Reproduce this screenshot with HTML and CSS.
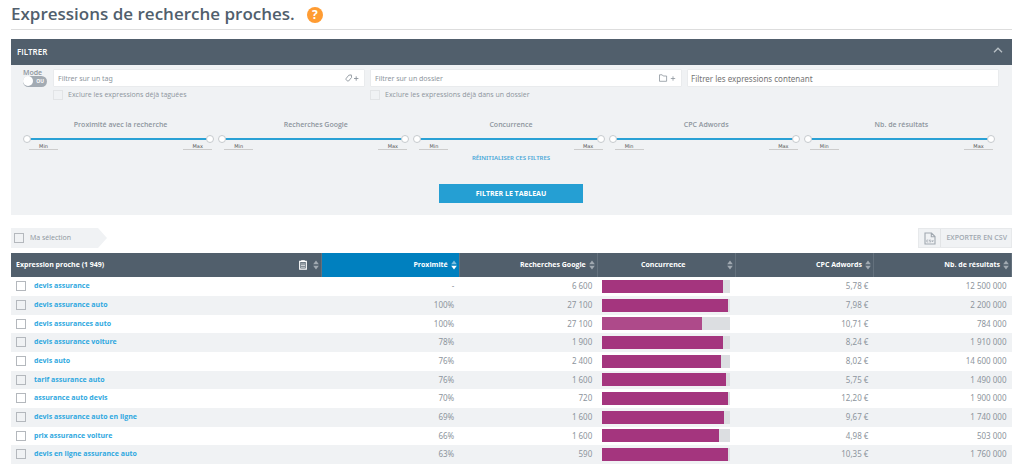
FILE: index.html
```html
<!DOCTYPE html>
<html lang="fr">
<head>
<meta charset="utf-8">
<title>Expressions de recherche proches</title>
<link rel="stylesheet" href="styles.css">
</head>
<body>
<svg class="defs" aria-hidden="true">
  <symbol id="sort" viewBox="0 0 6 10"><path d="M3 0.6 5.8 4.3H.2z"/><path d="M3 9.4 5.8 5.7H.2z"/></symbol>
  <symbol id="sort-desc" viewBox="0 0 6 10"><path d="M3 0.6 5.8 4.3H.2z" opacity=".5"/><path d="M3 9.4 5.8 5.7H.2z"/></symbol>
</svg>
<main class="page">
  <header class="title">
    <h1>Expressions de recherche proches.</h1>
    <button class="help" type="button" aria-label="Aide">?</button>
  </header>

  <form class="panel">
    <div class="panel-head">
      <h2>FILTRER</h2>
      <button class="collapse" type="button" aria-label="Replier">
        <svg viewBox="0 0 10 6"><path d="M1 5.2 5 1.2 9 5.2" fill="none" stroke="currentColor" stroke-width="1.3"/></svg>
      </button>
    </div>
    <div class="panel-body">
      <div class="fields">
        <label class="mode"><span>Mode</span>
          <span class="switch"><input type="checkbox"><span class="switch-text">OU</span></span>
        </label>
        <div class="field">
          <div class="box">
            <input type="text" placeholder="Filtrer sur un tag" aria-label="Filtrer sur un tag">
            <button class="add" type="button" aria-label="Ajouter un tag">
              <svg class="tag-icon" viewBox="0 0 14 8"><path d="M1.2 4.4 3.8 1.2 6.3.9 6.6 3.4 3.6 7Q2.9 7.4 2.2 6.8L1.2 5.8Q.7 5 1.2 4.4ZM9 4.5h4.4M11.2 2.3v4.4" fill="none" stroke="currentColor" stroke-width=".9"/></svg>
            </button>
          </div>
          <label class="check"><input type="checkbox"><span>Exclure les expressions déjà taguées</span></label>
        </div>
        <div class="field">
          <div class="box">
            <input type="text" placeholder="Filtrer sur un dossier" aria-label="Filtrer sur un dossier">
            <button class="add" type="button" aria-label="Ajouter un dossier">
              <svg class="folder-icon" viewBox="0 0 18 8"><path d="M1.5 7.3V.8H4.2L5.2 2H8.6V7.3ZM12.8 4.5h4.4M15 2.3v4.4" fill="none" stroke="currentColor" stroke-width=".8"/></svg>
            </button>
          </div>
          <label class="check"><input type="checkbox"><span>Exclure les expressions déjà dans un dossier</span></label>
        </div>
        <div class="field">
          <div class="box strong">
            <input type="text" placeholder="Filtrer les expressions contenant" aria-label="Filtrer les expressions contenant">
          </div>
        </div>
      </div>

      <div class="ranges">
        <fieldset class="range"><legend>Proximité avec la recherche</legend>
          <div class="slider"><input type="range" value="0" aria-label="Proximité minimum"><input type="range" value="100" aria-label="Proximité maximum"></div>
          <div class="bounds"><input type="text" placeholder="Min" aria-label="Proximité min"><input type="text" placeholder="Max" aria-label="Proximité max"></div>
        </fieldset>
        <fieldset class="range"><legend>Recherches Google</legend>
          <div class="slider"><input type="range" value="0" aria-label="Recherches minimum"><input type="range" value="100" aria-label="Recherches maximum"></div>
          <div class="bounds"><input type="text" placeholder="Min" aria-label="Recherches min"><input type="text" placeholder="Max" aria-label="Recherches max"></div>
        </fieldset>
        <fieldset class="range"><legend>Concurrence</legend>
          <div class="slider"><input type="range" value="0" aria-label="Concurrence minimum"><input type="range" value="100" aria-label="Concurrence maximum"></div>
          <div class="bounds"><input type="text" placeholder="Min" aria-label="Concurrence min"><input type="text" placeholder="Max" aria-label="Concurrence max"></div>
        </fieldset>
        <fieldset class="range"><legend>CPC Adwords</legend>
          <div class="slider"><input type="range" value="0" aria-label="CPC minimum"><input type="range" value="100" aria-label="CPC maximum"></div>
          <div class="bounds"><input type="text" placeholder="Min" aria-label="CPC min"><input type="text" placeholder="Max" aria-label="CPC max"></div>
        </fieldset>
        <fieldset class="range"><legend>Nb. de résultats</legend>
          <div class="slider"><input type="range" value="0" aria-label="Résultats minimum"><input type="range" value="100" aria-label="Résultats maximum"></div>
          <div class="bounds"><input type="text" placeholder="Min" aria-label="Résultats min"><input type="text" placeholder="Max" aria-label="Résultats max"></div>
        </fieldset>
      </div>
      <div class="actions">
        <button class="reset" type="reset">RÉINITIALISER CES FILTRES</button>
        <button class="submit" type="button">FILTRER LE TABLEAU</button>
      </div>
    </div>
  </form>

  <div class="toolbar">
    <label class="selection"><input type="checkbox"><span>Ma sélection</span></label>
    <button class="export" type="button">
      <span class="export-icon"><svg viewBox="0 0 12 13"><path d="M1 1h6.5L11 4.5V12H1ZM7.3 1v3.8H11" fill="none" stroke="currentColor" stroke-width="1.1"/><path d="M4.3 8H2.8v2h1.5M6.8 8H5.4v1h1.4v1H5.4M7.9 8l.7 2 .7-2" fill="none" stroke="currentColor" stroke-width=".7"/></svg></span>
      <span class="export-text">EXPORTER EN CSV</span>
    </button>
  </div>

  <table class="results">
    <thead>
      <tr>
        <th class="c-name"><div class="th"><span class="grow">Expression proche (1 949)</span>
          <svg class="clip" viewBox="0 0 8 10"><path d="M.7 1.3h6.6v7.8H.7z" fill="none" stroke="#fff" stroke-width="1.2"/><path d="M2.2.2h3.6v2H2.2z" fill="#fff"/><path d="M2 4h4M2 5.6h4M2 7.2h4" stroke="#fff" stroke-width=".8"/></svg>
          <svg class="sort"><use href="#sort"/></svg></div></th>
        <th class="sorted"><div class="th"><span>Proximité</span><svg class="sort"><use href="#sort-desc"/></svg></div></th>
        <th><div class="th"><span>Recherches Google</span><svg class="sort"><use href="#sort"/></svg></div></th>
        <th><div class="th"><span class="grow center">Concurrence</span><svg class="sort"><use href="#sort"/></svg></div></th>
        <th><div class="th"><span>CPC Adwords</span><svg class="sort"><use href="#sort"/></svg></div></th>
        <th><div class="th"><span>Nb. de résultats</span><svg class="sort"><use href="#sort"/></svg></div></th>
      </tr>
    </thead>
    <tbody>
      <tr><td><div class="name"><input type="checkbox" aria-label="devis assurance"><a href="#">devis assurance</a></div></td><td>-</td><td>6 600</td><td><div class="bar"><div class="fill" style="width:94%"></div></div></td><td>5,78 €</td><td>12 500 000</td></tr>
      <tr><td><div class="name"><input type="checkbox" aria-label="devis assurance auto"><a href="#">devis assurance auto</a></div></td><td>100%</td><td>27 100</td><td><div class="bar"><div class="fill" style="width:98%"></div></div></td><td>7,98 €</td><td>2 200 000</td></tr>
      <tr><td><div class="name"><input type="checkbox" aria-label="devis assurances auto"><a href="#">devis assurances auto</a></div></td><td>100%</td><td>27 100</td><td><div class="bar"><div class="fill medium" style="width:78%"></div></div></td><td>10,71 €</td><td>784 000</td></tr>
      <tr><td><div class="name"><input type="checkbox" aria-label="devis assurance voiture"><a href="#">devis assurance voiture</a></div></td><td>78%</td><td>1 900</td><td><div class="bar"><div class="fill" style="width:94%"></div></div></td><td>8,24 €</td><td>1 910 000</td></tr>
      <tr><td><div class="name"><input type="checkbox" aria-label="devis auto"><a href="#">devis auto</a></div></td><td>76%</td><td>2 400</td><td><div class="bar"><div class="fill" style="width:93%"></div></div></td><td>8,02 €</td><td>14 600 000</td></tr>
      <tr><td><div class="name"><input type="checkbox" aria-label="tarif assurance auto"><a href="#">tarif assurance auto</a></div></td><td>76%</td><td>1 600</td><td><div class="bar"><div class="fill" style="width:97%"></div></div></td><td>5,75 €</td><td>1 490 000</td></tr>
      <tr><td><div class="name"><input type="checkbox" aria-label="assurance auto devis"><a href="#">assurance auto devis</a></div></td><td>70%</td><td>720</td><td><div class="bar"><div class="fill" style="width:98%"></div></div></td><td>12,20 €</td><td>1 900 000</td></tr>
      <tr><td><div class="name"><input type="checkbox" aria-label="devis assurance auto en ligne"><a href="#">devis assurance auto en ligne</a></div></td><td>69%</td><td>1 600</td><td><div class="bar"><div class="fill" style="width:95%"></div></div></td><td>9,67 €</td><td>1 740 000</td></tr>
      <tr><td><div class="name"><input type="checkbox" aria-label="prix assurance voiture"><a href="#">prix assurance voiture</a></div></td><td>66%</td><td>1 600</td><td><div class="bar"><div class="fill" style="width:91%"></div></div></td><td>4,98 €</td><td>503 000</td></tr>
      <tr><td><div class="name"><input type="checkbox" aria-label="devis en ligne assurance auto"><a href="#">devis en ligne assurance auto</a></div></td><td>63%</td><td>590</td><td><div class="bar"><div class="fill" style="width:98%"></div></div></td><td>10,35 €</td><td>1 760 000</td></tr>
    </tbody>
  </table>
</main>
</body>
</html>
```
FILE: styles.css
```css
* { box-sizing: border-box; }
body { margin: 0; background: #fff; color: #8d959d; font: 7px/10px "Open Sans", "Noto Sans", sans-serif; }
button, input { margin: 0; padding: 0; border: 0; background: none; color: inherit; font: inherit; }
h1, h2 { margin: 0; }
svg { display: block; }
.defs { display: none; }
.page { padding: 0 12px 0 11px; }

.title { display: flex; align-items: center; gap: 12px; height: 30px; border-bottom: 1px solid #ddd; }
h1 { padding-bottom: 2px; color: #515f6d; font-size: 17px; line-height: 26px; font-weight: 600; }
.help { width: 16px; height: 16px; border-radius: 50%; background: #ff9c33; color: #fff; font-size: 12px; line-height: 16px; font-weight: 700; }

.panel { margin-top: 9px; background: #f0f2f4; }
.panel-head { display: flex; align-items: center; justify-content: space-between; height: 26px; padding: 0 9px 0 6px; background: #515f6c; }
h2 { color: #fff; font-size: 8px; line-height: 10px; font-weight: 600; }
.collapse { padding-bottom: 4px; color: #b9c0c6; }
.collapse svg { width: 10px; height: 6px; }
.panel-body { padding: 4px 13px 12px 12px; }

.fields { display: grid; grid-template-columns: 25px 1fr 1fr 1fr; gap: 5px; height: 51px; }
.mode { font-weight: 600; line-height: 7px; }
.switch { position: relative; display: flex; width: 24px; height: 11px; }
.switch input { appearance: none; width: 24px; height: 11px; border-radius: 6px; background: #a3abb3; }
.switch input::before { content: ""; display: block; width: 10px; height: 10px; border-radius: 50%; background: #fff; }
.switch-text { position: absolute; right: 3px; top: 2px; color: #fff; font-size: 5px; font-weight: 700; }
.box { display: flex; align-items: center; height: 18px; padding: 0 5px 0 4px; background: #fff; border: 1px solid #e9ebed; border-radius: 1px; }
.box input { flex: 1; min-width: 0; height: 14px; font: 7px/10px "Noto Sans", "Open Sans", sans-serif; }
.box.strong { padding-left: 3px; }
.box.strong input { font-size: 8px; color: #747474; }
input::placeholder { color: inherit; opacity: 1; }
.tag-icon { width: 14px; height: 8px; }
.folder-icon { width: 18px; height: 8px; }
input[type="checkbox"] { flex: none; }
.check { display: flex; align-items: center; gap: 5px; padding-top: 3px; }
.check input { appearance: none; width: 10px; height: 10px; border: 1px solid #e2e4e6; }

.ranges { display: grid; grid-template-columns: repeat(5, 1fr); gap: 4px; padding-right: 4px; }
.range { min-width: 0; margin: 0; padding: 0; border: 0; }
.range legend { width: 100%; padding: 0 0 0 4px; text-align: center; font-weight: 600; }
.slider { position: relative; height: 8px; margin-top: 5px; background: linear-gradient(#2aa1d5, #2aa1d5) center / calc(100% - 8px) 2px no-repeat; }
.slider input { position: absolute; left: 0; top: 0; width: 100%; height: 8px; appearance: none; pointer-events: none; }
.slider input::-webkit-slider-thumb { appearance: none; width: 8px; height: 8px; border: 1px solid #c6cacd; border-radius: 50%; background: #fff; pointer-events: auto; }
.bounds { display: flex; justify-content: space-between; padding: 0 2px 0 6px; }
.bounds input { width: 29px; height: 7px; border-bottom: 1px solid #ccc; color: #555; text-align: center; font: 5px/6px "DejaVu Sans", sans-serif; }

.actions { display: flex; flex-direction: column; align-items: center; gap: 21px; padding: 3px 0 0; }
.reset { color: #4aa8d8; font: 600 6px/10px "Noto Sans", "Open Sans", sans-serif; }
.submit { width: 144px; height: 19px; background: #259fd3; color: #fff; font-weight: 700; }

.toolbar { display: flex; justify-content: space-between; height: 20px; margin: 13px 0 5px; }
.selection { display: flex; align-items: center; gap: 6px; width: 96px; padding-left: 3px; background: #f0f2f4; clip-path: polygon(0 0, 87px 0, 100% 50%, 87px 100%, 0 100%); }
.selection input, .name input { appearance: none; width: 10px; height: 10px; border: 1px solid #b4b8bd; }
.export { display: flex; border: 1px solid #e7e9eb; background: #f0f2f4; color: #a0a8b0; font-weight: 600; }
.export-icon { display: flex; align-items: center; justify-content: center; width: 22px; height: 18px; border-right: 1px solid #e2e4e6; }
.export-icon svg { width: 12px; height: 13px; }
.export-text { padding: 0 4px 0 5px; line-height: 18px; }

.results { width: 100%; table-layout: fixed; border-collapse: collapse; text-align: right; }
th { height: 24px; padding: 0 2px 0 5px; background: #515f6c; border-right: 1px solid #64717d; color: #fff; font-weight: 700; }
.c-name { width: 31%; }
.sorted { background: #0080bf; }
.th { display: flex; align-items: center; justify-content: flex-end; gap: 3px; white-space: nowrap; }
.grow { flex: 1; text-align: left; }
.grow.center { text-align: center; }
.clip { width: 8px; height: 10px; margin-right: 3px; }
.sort { width: 6px; height: 10px; fill: #a1a9b1; }
.sorted .sort { fill: #fff; }
td { height: 19px; padding: 0 5px 1px; font: 8px/10px "Noto Sans", "Open Sans", sans-serif; }
tbody tr:nth-child(3n) td { height: 18px; }
tbody tr:nth-child(even) { background: #f0f2f4; }
.name { display: flex; align-items: center; gap: 8px; }
.name a { color: #2fa8e0; font: 700 7px/10px "Open Sans", "Noto Sans", sans-serif; text-decoration: none; }
.bar { height: 13px; background: #dcdee1; }
.fill { height: 100%; background: #a4357e; }
.medium { background: #ae4a8a; }
```
